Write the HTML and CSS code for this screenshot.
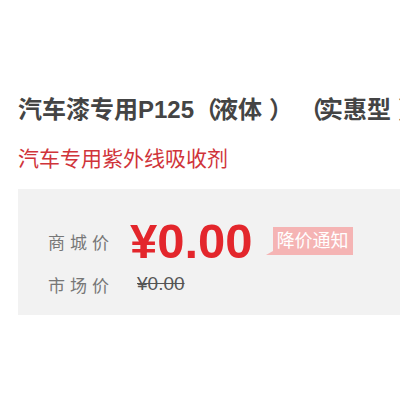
FILE: index.html
```html
<!DOCTYPE html>
<html lang="zh-CN">
<head>
    <meta charset="UTF-8">
    <meta name="viewport" content="width=device-width, initial-scale=1.0">
    <title>汽车漆专用P125</title>
    <link rel="stylesheet" href="styles.css">
</head>
<body>
    <div class="product">
        <!-- Product name -->
        <h1 class="product-title">汽车漆专用P125<span class="po">（</span>液体<span class="pc">）</span><span class="po">（</span>实惠型<span class="pc">）</span></h1>
        <p class="product-sub">汽车专用紫外线吸收剂</p>

        <!-- Price panel -->
        <div class="price-box">
            <div class="price-row">
                <span class="price-label">商城价</span>
                <span class="price-now">¥0.00</span>
                <span class="notice">降价通知</span>
            </div>
            <div class="price-row market">
                <span class="price-label">市场价</span>
                <span class="price-old">¥0.00</span>
            </div>
        </div>
    </div>
</body>
</html>
```

FILE: styles.css
```css
/* Page */
body {
    margin: 0;
    background: #fff;
    font-family: "Liberation Sans", "Noto Sans CJK SC", sans-serif;
    color: #333;
}

.product {
    padding: 95px 0 0 18px;
    overflow: hidden;
}

/* Title */
.product-title {
    margin: 0;
    font-size: 24px;
    line-height: 30px;
    font-weight: bold;
    color: #444;
    white-space: nowrap;
}

/* full width brackets, spaced like the original font */
.product-title .po {
    letter-spacing: -4px;
}

.product-title .pc {
    margin: 0 18px 0 7px;
}

.product-sub {
    margin: 20px 0 0;
    font-size: 21px;
    line-height: 28px;
    color: #d0343a;
}

/* Price panel */
.price-box {
    margin-top: 16px;
    background: #f2f2f2;
    padding: 24px 0 16px 30px;
}

.price-row {
    display: flex;
    align-items: center;
    height: 56px;
}

.price-row.market {
    height: 30px;
}

.price-label {
    width: 82px;
    font-size: 17px;
    letter-spacing: 5px;
    color: #777;
}

.price-now {
    font-size: 49px;
    font-weight: bold;
    color: #e3262c;
    line-height: 56px;
}

.notice {
    position: relative;
    margin-left: 20px;
    padding: 0 4px;
    height: 28px;
    line-height: 28px;
    font-size: 18px;
    color: #fff;
    background: #f5b4b4;
}

/* little tail at bottom left of the badge */
.notice::before {
    content: "";
    position: absolute;
    left: -7px;
    bottom: 0;
    border-style: solid;
    border-width: 0 0 4px 7px;
    border-color: transparent transparent #f5b4b4 transparent;
}

.price-old {
    margin-left: 7px;
    font-size: 19px;
    color: #555;
    text-decoration: line-through;
}
```
